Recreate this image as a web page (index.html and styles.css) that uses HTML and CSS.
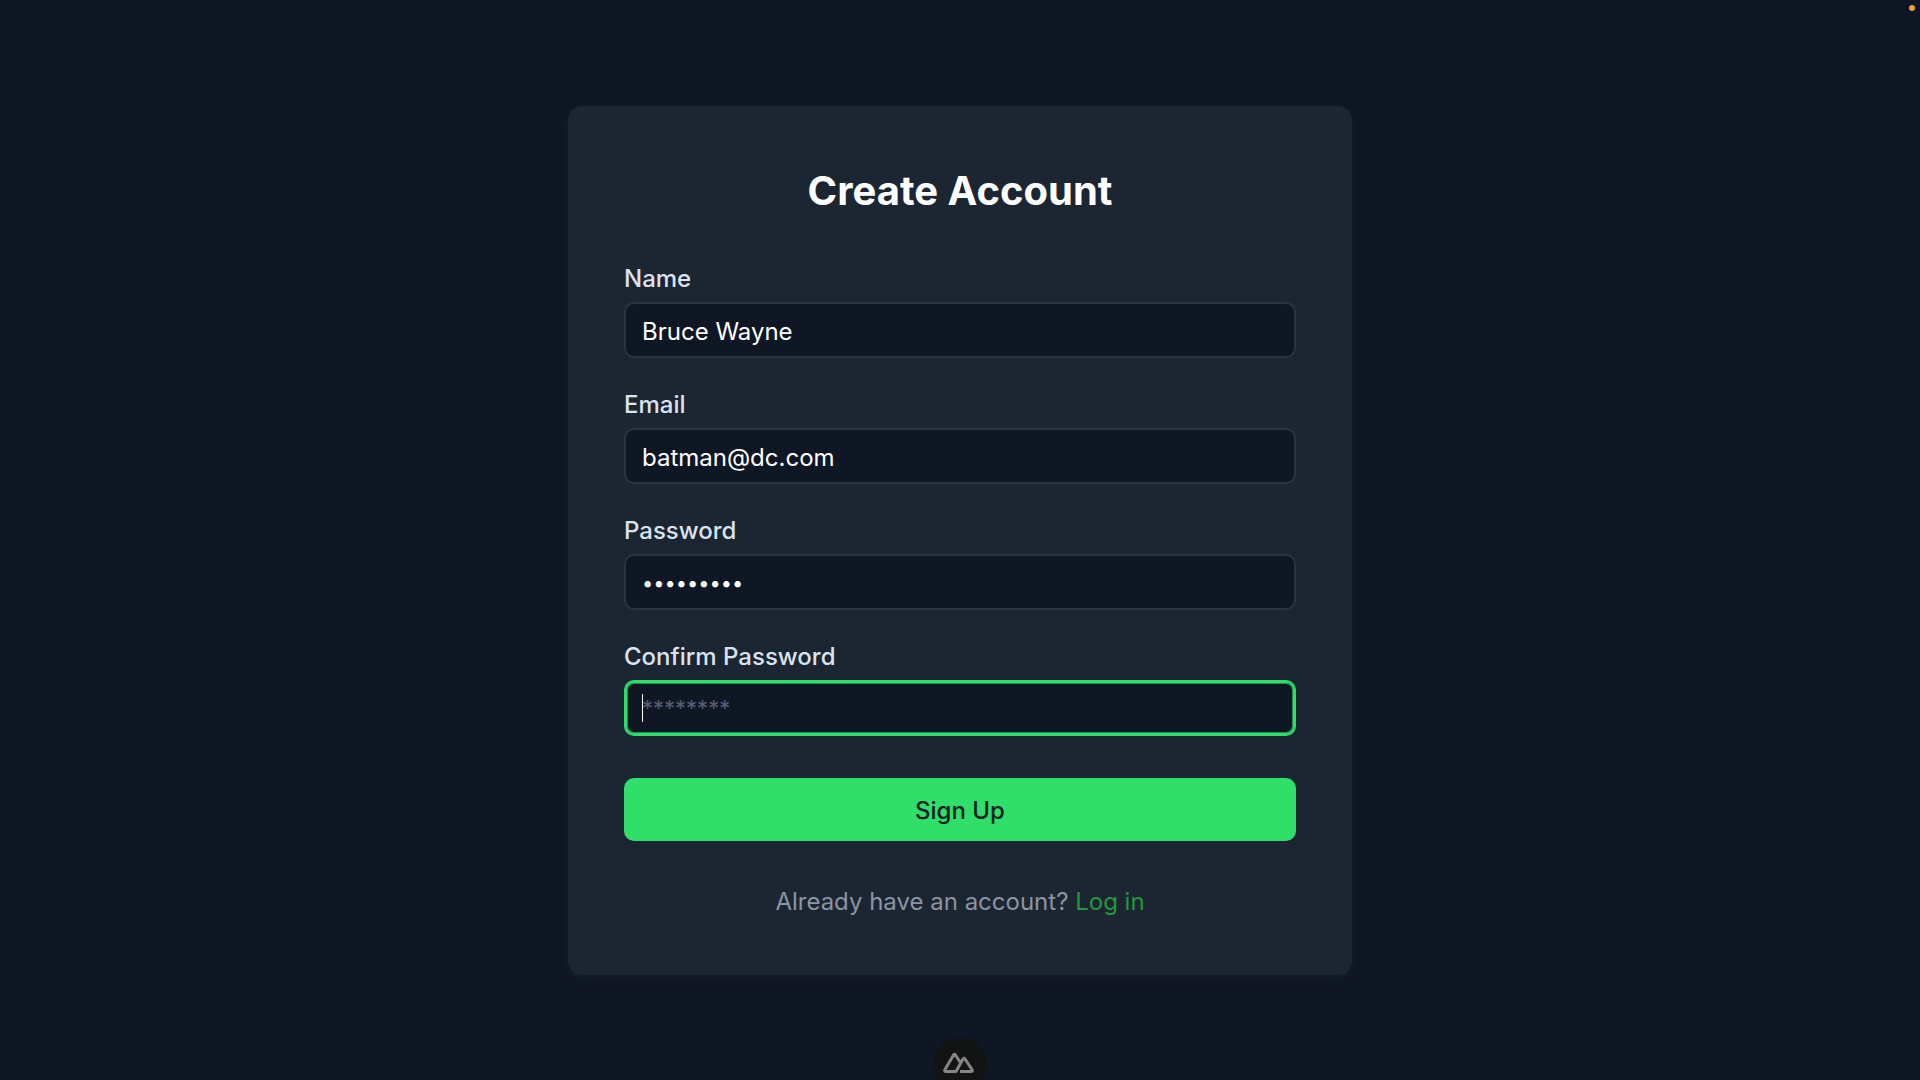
FILE: index.html
```html
<!DOCTYPE html>
<html lang="en">
<head>
    <meta charset="UTF-8">
    <meta name="viewport" content="width=device-width, initial-scale=1.0">
    <title>Create Account</title>
    <link rel="stylesheet" href="styles.css">
</head>
<body>
    <main class="page">
        <form class="card">
            <h1>Create Account</h1>

            <div class="field">
                <label for="name">Name</label>
                <input type="text" id="name" value="Bruce Wayne">
            </div>

            <div class="field">
                <label for="email">Email</label>
                <input type="email" id="email" value="batman@dc.com">
            </div>

            <div class="field">
                <label for="password">Password</label>
                <input type="password" id="password" value="imbatman1">
            </div>

            <div class="field">
                <label for="confirm">Confirm Password</label>
                <div class="caret-wrap">
                    <input type="password" id="confirm" placeholder="********" autofocus>
                </div>
            </div>

            <button type="submit" class="submit">Sign Up</button>

            <p class="login">Already have an account? <a href="#login">Log in</a></p>
        </form>
    </main>

    <!-- Recording indicator -->
    <span class="status-dot"></span>

    <!-- Devtools toggle -->
    <button type="button" class="devtools" aria-label="Toggle devtools">
        <svg width="32" height="22" viewBox="0 0 32 22" fill="none" stroke="#858583" stroke-width="3" stroke-linejoin="round">
            <path d="M20 7L13 19.500H3Q1 19.500 2 17.500L10.500 3Q11.500 1.500 12.500 3L17 10"/>
            <path d="M17 19.500H28Q30 19.500 29 17.500L22 7Q21 5.500 20 7"/>
        </svg>
    </button>
</body>
</html>
```
FILE: styles.css
```css
* {
    box-sizing: border-box;
}
body {
    margin: 0;
    background: #0f1624;
    color: #fff;
    font-family: Inter, "Liberation Sans", sans-serif;
    font-size: 24px;
    line-height: 35px;
}
.page {
    display: flex;
    align-items: center;
    justify-content: center;
    min-height: 100vh;
}
.card {
    width: 100%;
    max-width: 784px;
    padding: 56px;
    border-radius: 14px;
    background: #1c2532;
    box-shadow: 0 4px 8px rgba(28, 37, 50, 0.5);
}
h1 {
    margin: 0 0 41px;
    font-size: 40px;
    line-height: 58px;
    font-weight: 700;
    text-align: center;
}
.field {
    margin-bottom: 29px;
}
label {
    display: block;
    margin-bottom: 6px;
    color: #dbe3ef;
    font-weight: 500;
}
input {
    display: block;
    width: 100%;
    height: 56px;
    padding: 3px 16px 0;
    border: 2px solid #2b3442;
    border-radius: 10px;
    background: #0f1624;
    color: #fff;
    font: inherit;
}
input[type="password"] {
    padding-top: 2px;
    font-size: 20px;
}
input::placeholder {
    color: #566078;
    font-size: 22px;
}
input:focus {
    outline: none;
    border-color: #30dd68;
    box-shadow: inset 0 0 0 1px #30dd68, inset 0 0 0 2px #1f8f4c;
    caret-color: transparent;
}
/* thin caret in the focused, still empty field */
.caret-wrap {
    position: relative;
}
.caret-wrap:focus-within::after {
    content: "";
    position: absolute;
    top: 14px;
    left: 18px;
    width: 1px;
    height: 28px;
    background: #fff;
}
.submit {
    display: block;
    width: 100%;
    height: 63px;
    margin: 42px 0 43px;
    padding: 2px 0 0;
    border: none;
    border-radius: 10px;
    background: #30df69;
    color: #0f1e24;
    font: inherit;
    font-weight: 500;
    cursor: pointer;
}
.login {
    margin: 0;
    color: #8c94a4;
    text-align: center;
}
.login a {
    color: #23983b;
    text-decoration: none;
}
.status-dot {
    position: fixed;
    top: 5px;
    right: 5px;
    width: 6px;
    height: 6px;
    border-radius: 50%;
    background: #f0a02c;
}
.devtools {
    position: fixed;
    bottom: -12px;
    left: 50%;
    display: flex;
    justify-content: center;
    width: 54px;
    height: 54px;
    margin-left: -27px;
    padding: 14px 2px 0 0;
    border: none;
    border-radius: 50%;
    background: #121413;
    cursor: pointer;
}
```
